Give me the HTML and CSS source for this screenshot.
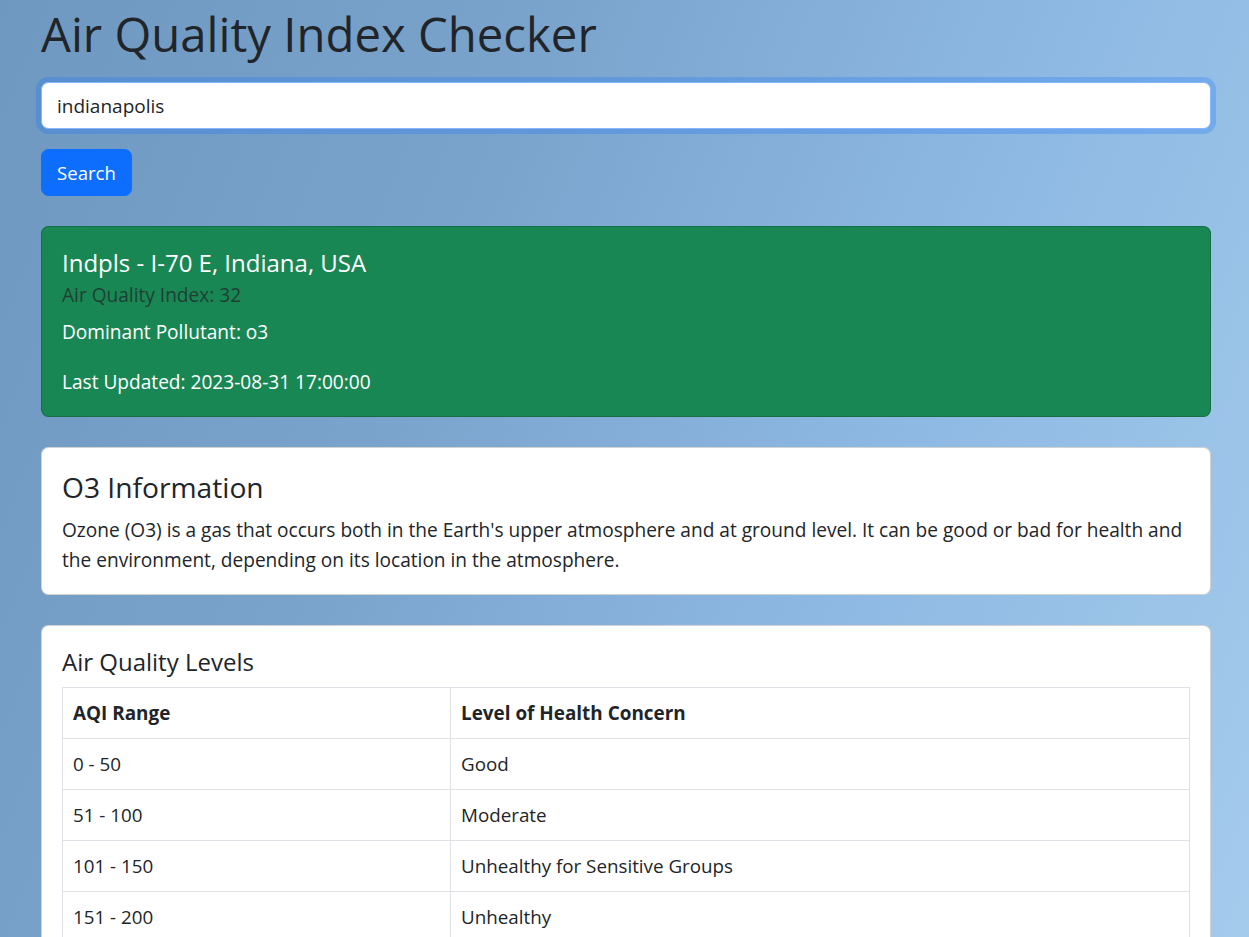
FILE: index.html
```html
<!DOCTYPE html>
<html lang="en">
<head>
<meta charset="utf-8">
<title>Air Quality Index Checker</title>
<link rel="stylesheet" href="styles.css">
</head>
<body>
<div class="container">
  <h1 class="page-title">Air Quality Index Checker</h1>
  <form class="search-form">
    <input class="search-input" type="text" value="indianapolis" autofocus>
    <button class="btn-search" type="button">Search</button>
  </form>

  <div class="card card-success">
    <div class="card-body">
      <h5 class="card-title">Indpls - I-70 E, Indiana, USA</h5>
      <h6 class="card-subtitle">Air Quality Index: 32</h6>
      <p class="card-text">Dominant Pollutant: o3</p>
      <p class="card-text">Last Updated: 2023-08-31 17:00:00</p>
    </div>
  </div>

  <div class="card">
    <div class="card-body">
      <h4 class="card-heading">O3 Information</h4>
      <p class="card-text">Ozone (O3) is a gas that occurs both in the Earth's upper atmosphere and at ground level. It can be good or bad for health and the environment, depending on its location in the atmosphere.</p>
    </div>
  </div>

  <div class="card">
    <div class="card-body">
      <h5 class="card-title">Air Quality Levels</h5>
      <table class="levels">
        <colgroup><col class="col-range"><col></colgroup>
        <thead>
          <tr><th>AQI Range</th><th>Level of Health Concern</th></tr>
        </thead>
        <tbody>
          <tr><td>0 - 50</td><td>Good</td></tr>
          <tr><td>51 - 100</td><td>Moderate</td></tr>
          <tr><td>101 - 150</td><td>Unhealthy for Sensitive Groups</td></tr>
          <tr><td>151 - 200</td><td>Unhealthy</td></tr>
          <tr><td>201 - 300</td><td>Very Unhealthy</td></tr>
          <tr><td>301 - 500</td><td>Hazardous</td></tr>
        </tbody>
      </table>
    </div>
  </div>
</div>
</body>
</html>
```
FILE: styles.css
```css
* { box-sizing: border-box; }

html, body {
  margin: 0;
  padding: 0;
}

body {
  min-height: 100vh;
  font-family: "Open Sans", "Noto Sans", sans-serif;
  font-size: 19.1px;
  line-height: 30px;
  color: #212529;
  background: linear-gradient(112deg, #6f98c1 0%, #7ba4cd 35%, #8db8e2 65%, #a4cbec 100%);
  background-attachment: fixed;
}

.container {
  width: 1170px;
  margin-left: 41px;
  padding-top: 4px;
  padding-bottom: 40px;
}

.page-title {
  margin: 0 0 18px;
  font-size: 47.3px;
  font-weight: 400;
  line-height: 60px;
  color: #212529;
}

.search-form {
  display: flex;
  flex-direction: column;
  align-items: flex-start;
  gap: 20px;
}

.search-input {
  width: 100%;
  height: 47px;
  padding: 0 15px;
  font-family: inherit;
  font-size: 19px;
  color: #212529;
  background: #fff;
  border: 1px solid #86b7fe;
  border-radius: 7.5px;
  box-shadow: 0 0 0 5px rgba(13, 110, 253, 0.25);
  outline: none;
  caret-color: #212529;
}

.btn-search {
  height: 47px;
  padding: 0 15px;
  font-family: inherit;
  font-size: 18.6px;
  color: #fff;
  background: #0d6efd;
  border: 1px solid #0d6efd;
  border-radius: 7.5px;
}

.card {
  margin-top: 30px;
  background: #fff;
  border: 1px solid rgba(0, 0, 0, 0.175);
  border-radius: 7.5px;
  overflow: hidden;
}

.card-success {
  background: #198754;
  color: #fff;
}

.card-body {
  padding: 21px 20px 19px;
}

.card-title {
  margin: 0 0 10px;
  font-size: 24px;
  font-weight: 400;
  line-height: 30px;
}

.card-heading {
  margin: 0 0 10px;
  font-size: 28.2px;
  font-weight: 400;
  line-height: 36px;
}

.card-subtitle {
  margin: -5px 0 10px;
  font-size: 19.1px;
  font-weight: 400;
  line-height: 24px;
  color: rgba(33, 37, 41, 0.75);
}

.card-text {
  margin: 0 0 20px;
}

.card-text:last-child {
  margin-bottom: 0;
}

.levels {
  width: 100%;
  border-collapse: collapse;
  color: #212529;
  font-size: 18.8px;
}

.col-range {
  width: 388px;
}

.levels th,
.levels td {
  padding: 10px;
  border: 1px solid #dee2e6;
  text-align: left;
  vertical-align: top;
}

.levels th {
  font-size: 18.9px;
  font-weight: 700;
}
```
